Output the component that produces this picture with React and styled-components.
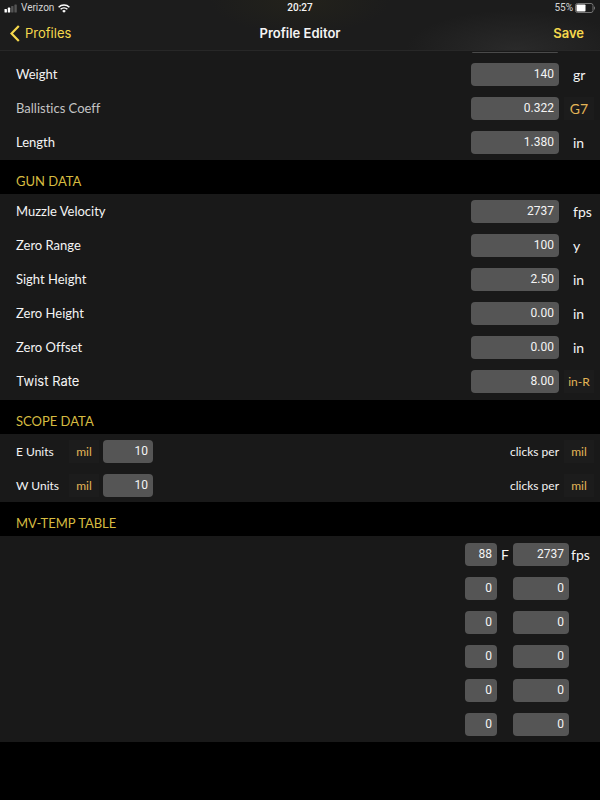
import { useState } from 'react';
import styled, { createGlobalStyle } from 'styled-components';

const GlobalStyle = createGlobalStyle`
  * {
    box-sizing: border-box;
  }

  body {
    margin: 0;
    background: #000;
    color: #f4f4f4;
    font-family: Lato, "Liberation Sans", sans-serif;
    font-variant-ligatures: none;
  }

  button, input {
    font-family: inherit;
    border: none;
    margin: 0;
    padding: 0;
  }
`;

const Header = styled.header`
  background:
    radial-gradient(ellipse 110px 40px at 86% 100%, #2a2a2a, transparent),
    radial-gradient(ellipse 90px 34px at 50% 0, #23221b, transparent),
    #1c1c1c;
  border-bottom: 1px solid #272727;
  font-family: Inter, sans-serif;
`;

const StatusBar = styled.div`
  display: grid;
  grid-template-columns: 1fr auto 1fr;
  align-items: center;
  height: 16px;
  padding: 0 4px;
  font-family: Roboto, sans-serif;
  font-size: 10px;
  line-height: 16px;
`;

const StatusGroup = styled.div`
  display: flex;
  align-items: center;
  justify-content: ${({ $end }) => ($end ? 'flex-end' : 'flex-start')};
  gap: ${({ $end }) => ($end ? '2px' : '4px')};
  color: #d4d4d4;
`;

const Clock = styled.span`
  font-weight: 500;
`;

const NavBar = styled.nav`
  display: grid;
  grid-template-columns: 1fr auto 1fr;
  align-items: center;
  height: 34px;
  padding: 0 10px;
`;

const BackLink = styled.a`
  display: flex;
  align-items: center;
  gap: 5px;
  color: #f5d84c;
  font-size: 13px;
  text-decoration: none;
`;

const Title = styled.h1`
  margin: 0;
  font-size: 13px;
  font-weight: 600;
`;

const SaveButton = styled.button`
  justify-self: end;
  padding: 0 6px;
  background: none;
  color: #f5d84c;
  font-size: 13px;
  font-weight: 600;
`;

const Group = styled.div`
  padding: ${({ $pad }) => $pad || '1px 0'};
  background: #191919;
`;

// bottom edge of the field that is scrolled under the header
const ScrolledField = styled.div`
  height: 1px;
  margin: 0 42px 4px auto;
  width: 86px;
  border-radius: 0 0 4px 4px;
  background: #4a4a4a;
`;

const SectionTitle = styled.h2`
  height: 34px;
  margin: 0;
  padding: 8px 16px 0;
  color: #d6bb40;
  font-size: 13px;
  font-weight: 400;
  line-height: 26px;
`;

const Row = styled.div`
  display: flex;
  align-items: center;
  height: 34px;
  padding-left: 16px;
`;

const Label = styled.label`
  flex: 1;
  color: ${({ $dim }) => ($dim ? '#c4c4c4' : '#f4f4f4')};
  font-size: 13px;
  font-family: ${({ $system }) => ($system ? 'Inter, sans-serif' : 'inherit')};
`;

const UnitsLabel = styled.label`
  width: 48px;
  font-size: 12px;
`;

const Field = styled.input`
  width: ${({ $width }) => $width}px;
  height: 23px;
  padding-right: 5px;
  border-radius: 4px;
  background: #555;
  color: #f4f4f4;
  font-family: Roboto, sans-serif;
  font-size: 12px;
  text-align: right;
`;

const Unit = styled.span`
  width: 41px;
  padding-left: 14px;
  font-size: 14px;
`;

const UnitButton = styled.button`
  width: 30px;
  height: 23px;
  margin: 0 ${({ $inner }) => ($inner ? '4px' : '6px')} 0 5px;
  background: #1c1c1c;
  color: #e3b557;
  font-size: ${({ $large }) => ($large ? '14px' : '12px')};
`;

const ClicksLabel = styled.span`
  margin-left: auto;
  font-size: 12px;
`;

const TempUnit = styled.span`
  width: 16px;
  text-align: center;
  font-size: 14px;
`;

const SpeedUnit = styled.span`
  width: 31px;
  padding-left: 2px;
  font-size: 14px;
`;

const TempRow = styled(Row)`
  justify-content: flex-end;
`;

const bulletRows = [
  { id: 'weight', label: 'Weight', value: '140', unit: 'gr' },
  { id: 'coeff', label: 'Ballistics Coeff', value: '0.322', unit: 'G7', button: true, large: true, dim: true },
  { id: 'length', label: 'Length', value: '1.380', unit: 'in' },
];

const gunRows = [
  { id: 'velocity', label: 'Muzzle Velocity', value: '2737', unit: 'fps' },
  { id: 'range', label: 'Zero Range', value: '100', unit: 'y' },
  { id: 'sight', label: 'Sight Height', value: '2.50', unit: 'in' },
  { id: 'zeroHeight', label: 'Zero Height', value: '0.00', unit: 'in' },
  { id: 'zeroOffset', label: 'Zero Offset', value: '0.00', unit: 'in' },
  { id: 'twist', label: 'Twist Rate', value: '8.00', unit: 'in-R', button: true, system: true },
];

const scopeRows = [
  { id: 'elevation', label: 'E Units', value: '10' },
  { id: 'windage', label: 'W Units', value: '10' },
];

const tempRows = [['88', '2737'], ['0', '0'], ['0', '0'], ['0', '0'], ['0', '0'], ['0', '0']];

const SignalIcon = () => (
  <svg width="13" height="9" viewBox="0 0 13 9" aria-hidden="true">
    <rect x=".5" y="5" width="2.4" height="3.5" rx=".6" fill="#fff" />
    <rect x="3.8" y="3.6" width="2.4" height="4.9" rx=".6" fill="#fff" />
    <rect x="7.1" y="2" width="2.4" height="6.5" rx=".6" fill="#555" />
    <rect x="10.4" y=".5" width="2.4" height="8" rx=".6" fill="#555" />
  </svg>
);

const WifiIcon = () => (
  <svg width="12" height="9" viewBox="0 0 12 9" fill="none" stroke="#fff" strokeWidth="1.5" aria-hidden="true">
    <path d="M.6 3.2a7.7 7.7 0 0 1 10.8 0" />
    <path d="M2.6 5.3a4.9 4.9 0 0 1 6.8 0" />
    <path d="M6 8.8 4.2 6.9a2.6 2.6 0 0 1 3.6 0z" fill="#fff" stroke="none" />
  </svg>
);

const BatteryIcon = () => (
  <svg width="21" height="10" viewBox="0 0 21 10" aria-hidden="true">
    <rect x=".5" y=".5" width="17.5" height="9" rx="2" fill="none" stroke="#777" />
    <rect x="1.5" y="1.5" width="9" height="7" rx=".8" fill="#fff" />
    <path d="M19 3.2c1.4.5 1.4 3.1 0 3.6z" fill="#777" />
  </svg>
);

const BackIcon = () => (
  <svg width="10" height="17" viewBox="0 0 10 17" fill="none" stroke="#f5d84c" strokeWidth="2.2" aria-hidden="true">
    <path d="M8.8 1 1.5 8.5 8.8 16" />
  </svg>
);

const NumberField = ({ initial, ...props }) => {
  const [value, setValue] = useState(initial);

  return (
    <Field
      inputMode="decimal"
      value={value}
      onChange={(e) => setValue(e.target.value)}
      {...props}
    />
  );
};

const DataRow = ({ id, label, value, unit, button, large, dim, system }) => (
  <Row>
    <Label htmlFor={id} $dim={dim} $system={system}>{label}</Label>
    <NumberField id={id} initial={value} $width={88} />
    {button
      ? <UnitButton type="button" $large={large}>{unit}</UnitButton>
      : <Unit>{unit}</Unit>}
  </Row>
);

const App = () => (
  <>
    <GlobalStyle />
    <Header>
      <StatusBar>
        <StatusGroup>
          <SignalIcon />
          <span>Verizon</span>
          <WifiIcon />
        </StatusGroup>
        <Clock>20:27</Clock>
        <StatusGroup $end>
          <span>55%</span>
          <BatteryIcon />
        </StatusGroup>
      </StatusBar>
      <NavBar>
        <BackLink href="#profiles"><BackIcon />Profiles</BackLink>
        <Title>Profile Editor</Title>
        <SaveButton type="button">Save</SaveButton>
      </NavBar>
    </Header>

    <main>
      <Group>
        <ScrolledField />
        {bulletRows.map((row) => <DataRow key={row.id} {...row} />)}
      </Group>

      <SectionTitle>GUN DATA</SectionTitle>
      <Group $pad="0 0 2px">
        {gunRows.map((row) => <DataRow key={row.id} {...row} />)}
      </Group>

      <SectionTitle>SCOPE DATA</SectionTitle>
      <Group $pad="0">
        {scopeRows.map(({ id, label, value }) => (
          <Row key={id}>
            <UnitsLabel htmlFor={id}>{label}</UnitsLabel>
            <UnitButton type="button" $inner>mil</UnitButton>
            <NumberField id={id} initial={value} $width={50} />
            <ClicksLabel>clicks per</ClicksLabel>
            <UnitButton type="button">mil</UnitButton>
          </Row>
        ))}
      </Group>

      <SectionTitle>MV-TEMP TABLE</SectionTitle>
      <Group>
        {tempRows.map(([temp, speed], i) => (
          <TempRow key={i}>
            <NumberField initial={temp} $width={32} aria-label="Temperature" />
            <TempUnit>{i === 0 && 'F'}</TempUnit>
            <NumberField initial={speed} $width={56} aria-label="Velocity" />
            <SpeedUnit>{i === 0 && 'fps'}</SpeedUnit>
          </TempRow>
        ))}
      </Group>
    </main>
  </>
);

export default App;
